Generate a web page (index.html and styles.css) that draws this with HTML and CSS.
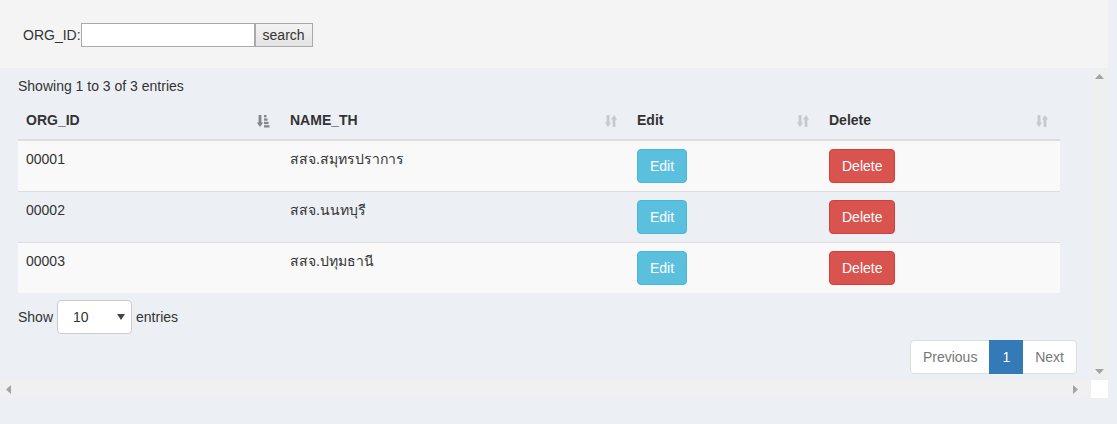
FILE: index.html
```html
<!DOCTYPE html>
<html lang="th">
<head>
    <meta charset="UTF-8">
    <meta name="viewport" content="width=device-width, initial-scale=1.0">
    <title>ORG List</title>
    <link rel="stylesheet" href="styles.css">
</head>
<body>
<div class="page">

    <div class="search-box">
        <form class="search-form">
            <label for="orgId">ORG_ID:</label><input type="text" id="orgId"><button type="button" class="search-btn">search</button>
        </form>
    </div>

    <div class="scroll-frame">
        <div class="scroll-main">
            <div class="table-area">
                <div class="dt-info">Showing 1 to 3 of 3 entries</div>

                <table class="data-table">
                    <colgroup>
                        <col class="w-id">
                        <col class="w-name">
                        <col class="w-edit">
                        <col class="w-del">
                    </colgroup>
                    <thead>
                        <tr>
                            <th>
                                <div class="th-inner">ORG_ID
                                    <svg class="sort-icon sorted" width="13" height="14" viewBox="0 0 13 14">
                                        <path d="M1.6 1h2.8v7.5h1.8l-3.2 4.5-3.2-4.5h1.8z" fill="#333"/>
                                        <rect x="7" y="1" width="2.5" height="2.3" fill="#333"/>
                                        <rect x="7" y="4.4" width="3.5" height="2.3" fill="#333"/>
                                        <rect x="7" y="7.8" width="4.5" height="2.3" fill="#333"/>
                                        <rect x="7" y="11.2" width="5.5" height="2.3" fill="#333"/>
                                    </svg>
                                </div>
                            </th>
                            <th>
                                <div class="th-inner">NAME_TH
                                    <svg class="sort-icon" width="12" height="14" viewBox="0 0 12 14">
                                        <path d="M1.6 1h2.8v7.5h1.6l-3 4.5-3-4.5h1.6z M7.6 13h2.8V5.5H12L9 1 6 5.5h1.6z" fill="#333"/>
                                    </svg>
                                </div>
                            </th>
                            <th>
                                <div class="th-inner">Edit
                                    <svg class="sort-icon" width="12" height="14" viewBox="0 0 12 14">
                                        <path d="M1.6 1h2.8v7.5h1.6l-3 4.5-3-4.5h1.6z M7.6 13h2.8V5.5H12L9 1 6 5.5h1.6z" fill="#333"/>
                                    </svg>
                                </div>
                            </th>
                            <th>
                                <div class="th-inner">Delete
                                    <svg class="sort-icon" width="12" height="14" viewBox="0 0 12 14">
                                        <path d="M1.6 1h2.8v7.5h1.6l-3 4.5-3-4.5h1.6z M7.6 13h2.8V5.5H12L9 1 6 5.5h1.6z" fill="#333"/>
                                    </svg>
                                </div>
                            </th>
                        </tr>
                    </thead>
                    <tbody>
                        <tr class="odd">
                            <td>00001</td>
                            <td>สสจ.สมุทรปราการ</td>
                            <td><button type="button" class="btn btn-info">Edit</button></td>
                            <td><button type="button" class="btn btn-danger">Delete</button></td>
                        </tr>
                        <tr class="even">
                            <td>00002</td>
                            <td>สสจ.นนทบุรี</td>
                            <td><button type="button" class="btn btn-info">Edit</button></td>
                            <td><button type="button" class="btn btn-danger">Delete</button></td>
                        </tr>
                        <tr class="odd">
                            <td>00003</td>
                            <td>สสจ.ปทุมธานี</td>
                            <td><button type="button" class="btn btn-info">Edit</button></td>
                            <td><button type="button" class="btn btn-danger">Delete</button></td>
                        </tr>
                    </tbody>
                </table>

                <div class="dt-length">
                    <label>Show
                        <span class="select-wrap">
                            <select class="length-select">
                                <option>10</option>
                                <option>25</option>
                                <option>50</option>
                                <option>100</option>
                            </select>
                            <svg class="select-arrow" width="8" height="6" viewBox="0 0 8 6"><path d="M0 0h8L4 6z" fill="#444"/></svg>
                        </span>
                        entries</label>
                </div>

                <div class="dt-paginate">
                    <ul class="pagination">
                        <li class="disabled"><a>Previous</a></li>
                        <li class="active"><a>1</a></li>
                        <li class="disabled"><a>Next</a></li>
                    </ul>
                </div>
            </div>

            <div class="vscroll">
                <svg width="9" height="5" viewBox="0 0 9 5"><path d="M0 5h9L4.5 0z" fill="#a3a3a3"/></svg>
                <svg width="9" height="5" viewBox="0 0 9 5"><path d="M0 0h9L4.5 5z" fill="#a3a3a3"/></svg>
            </div>
        </div>

        <div class="hscroll">
            <div class="hscroll-track">
                <svg width="5" height="9" viewBox="0 0 5 9"><path d="M5 0v9L0 4.5z" fill="#a3a3a3"/></svg>
                <svg width="5" height="9" viewBox="0 0 5 9"><path d="M0 0v9l5-4.5z" fill="#a3a3a3"/></svg>
            </div>
            <div class="scroll-corner"></div>
        </div>
    </div>

</div>
</body>
</html>
```

FILE: styles.css
```css
html, body {
    margin: 0;
    padding: 0;
}
body {
    font-family: "Liberation Sans", Arial, sans-serif;
    font-size: 14px;
    line-height: 20px;
    color: #333;
    background-color: #ecf0f5;
}
.page {
    width: 1108px;
}
.search-box {
    background: #f4f4f4;
    height: 68px;
    box-sizing: border-box;
    padding: 23px 0 0 23px;
}
.search-form {
    display: flex;
    align-items: center;
    margin: 0;
}
.search-form label {
    font-size: 14px;
    line-height: 24px;
}
.search-form input[type="text"] {
    width: 174px;
    height: 24px;
    box-sizing: border-box;
    border: 1px solid #a9a9a9;
    padding: 1px 3px;
    margin: 0;
    font-family: inherit;
    font-size: 14px;
    background: #fff;
}
.search-btn {
    height: 24px;
    width: 58px;
    box-sizing: border-box;
    margin: 0;
    padding: 0 6px;
    border: 1px solid #a9a9a9;
    border-radius: 0;
    background: linear-gradient(#f3f3f3, #e3e3e3);
    font-family: inherit;
    font-size: 14px;
    color: #333;
}

/* scroll box with drawn scrollbars */
.scroll-frame {
    height: 330px;
    display: flex;
    flex-direction: column;
}
.scroll-main {
    flex: 1;
    display: flex;
    min-height: 0;
}
.table-area {
    flex: 1;
    overflow: hidden;
    padding: 0 14px 0 18px;
}
.vscroll {
    width: 17px;
    background: #eef0f0;
    display: flex;
    flex-direction: column;
    justify-content: space-between;
    align-items: center;
    padding: 6px 0 6px;
    box-sizing: border-box;
}
.hscroll {
    height: 18px;
    display: flex;
}
.hscroll-track {
    flex: 1;
    background: #f0f0f0;
    display: flex;
    justify-content: space-between;
    align-items: center;
    padding: 0 13px 0 6px;
}
.scroll-corner {
    width: 17px;
    background: #fff;
}

.dt-info {
    padding-top: 8px;
    line-height: 20px;
}
.data-table {
    width: 1042px;
    border-collapse: collapse;
    margin: 6px 0 7px;
    table-layout: fixed;
}
.w-id { width: 264px; }
.w-name { width: 347px; }
.w-edit { width: 192px; }
.w-del { width: 239px; }
.data-table th {
    text-align: left;
    font-weight: bold;
    padding: 8px 8px 9px;
    line-height: 20px;
    border-bottom: 2px solid #ddd;
}
.th-inner {
    display: flex;
    justify-content: space-between;
    align-items: center;
    padding-right: 4px;
}
.sort-icon {
    opacity: 0.2;
    margin-top: 1px;
}
.sort-icon.sorted {
    opacity: 0.55;
}
.data-table td {
    padding: 8px;
    line-height: 20px;
    vertical-align: top;
    border-top: 1px solid #ddd;
}
.data-table tr.odd td {
    background: #f9f9f9;
}
.btn {
    display: inline-block;
    padding: 6px 12px;
    font-family: inherit;
    font-size: 14px;
    line-height: 20px;
    border: 1px solid transparent;
    border-radius: 4px;
    color: #fff;
    cursor: pointer;
}
.btn-info {
    background: #5bc0de;
    border-color: #46b8da;
}
.btn-danger {
    background: #d9534f;
    border-color: #d43f3a;
}
.dt-length label {
    display: flex;
    align-items: center;
    gap: 4px;
    font-weight: normal;
}
.select-wrap {
    position: relative;
    display: inline-block;
    height: 34px;
}
.length-select {
    appearance: none;
    -webkit-appearance: none;
    width: 75px;
    height: 34px;
    padding: 6px 15px;
    font-family: inherit;
    font-size: 14px;
    color: #333;
    border: 1px solid #ccc;
    border-radius: 4px;
    background: #fff;
}
.select-arrow {
    position: absolute;
    right: 7px;
    top: 14px;
}
.dt-paginate {
    display: flex;
    justify-content: flex-end;
    margin-top: 6px;
}
.pagination {
    display: flex;
    list-style: none;
    margin: 0;
    padding: 0;
}
.pagination a {
    display: block;
    padding: 6px 12px;
    line-height: 20px;
    border: 1px solid #ddd;
    margin-left: -1px;
    background: #fff;
    color: #777;
}
.pagination li:first-child a {
    border-radius: 4px 0 0 4px;
    margin-left: 0;
}
.pagination li:last-child a {
    border-radius: 0 4px 4px 0;
}
.pagination li.active a {
    background: #337ab7;
    border-color: #337ab7;
    color: #fff;
    position: relative;
    z-index: 2;
}
```
